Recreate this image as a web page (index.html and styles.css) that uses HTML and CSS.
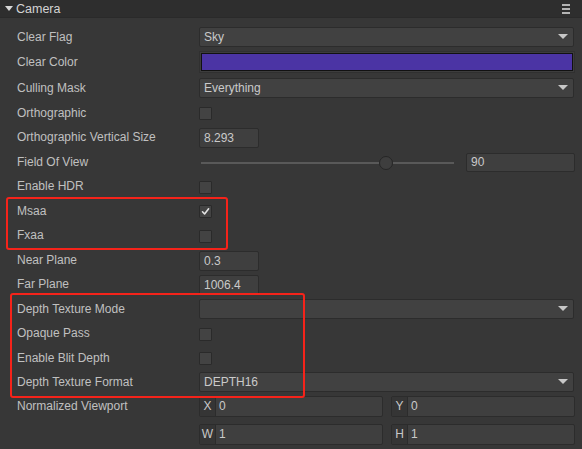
FILE: index.html
```html
<!DOCTYPE html>
<html>
<head>
<meta charset="utf-8">
<link rel="stylesheet" href="styles.css">
</head>
<body>
<div class="panel">
  <div class="header">
    <span class="caret"></span>
    <span class="title">Camera</span>
    <span class="menu"><i></i><i></i><i></i></span>
  </div>
  <div class="body">
    <div class="row"><span class="label">Clear Flag</span><div class="select">Sky<span class="arrow"></span></div></div>
    <div class="row row-tall"><span class="label">Clear Color</span><div class="color"><div class="swatch"></div></div></div>
    <div class="row"><span class="label">Culling Mask</span><div class="select">Everything<span class="arrow"></span></div></div>
    <div class="row"><span class="label">Orthographic</span><div><span class="check"></span></div></div>
    <div class="row"><span class="label">Orthographic Vertical Size</span><div><span class="num">8.293</span></div></div>
    <div class="row"><span class="label">Field Of View</span>
      <div class="slider"><div class="track"><span class="knob"></span></div><span class="num num-wide">90</span></div>
    </div>
    <div class="row"><span class="label">Enable HDR</span><div><span class="check"></span></div></div>
    <div class="row"><span class="label">Msaa</span><div><span class="check"><svg width="11" height="11" viewBox="0 0 11 11"><polyline points="2.5,5.8 4.6,8 8.6,2.8" fill="none" stroke="#e2e2e2" stroke-width="1.6" stroke-linecap="round" stroke-linejoin="round"/></svg></span></div></div>
    <div class="row"><span class="label">Fxaa</span><div><span class="check"></span></div></div>
    <div class="row"><span class="label">Near Plane</span><div><span class="num">0.3</span></div></div>
    <div class="row"><span class="label">Far Plane</span><div><span class="num">1006.4</span></div></div>
    <div class="row"><span class="label">Depth Texture Mode</span><div class="select"><span class="arrow"></span></div></div>
    <div class="row"><span class="label">Opaque Pass</span><div><span class="check"></span></div></div>
    <div class="row"><span class="label">Enable Blit Depth</span><div><span class="check"></span></div></div>
    <div class="row"><span class="label">Depth Texture Format</span><div class="select">DEPTH16<span class="arrow"></span></div></div>
    <div class="row-vp">
      <span class="label label-vp">Normalized Viewport</span>
      <div class="vp">
        <div class="field"><span class="axis">X</span><span class="fin">0</span></div>
        <div class="field"><span class="axis">Y</span><span class="fin">0</span></div>
        <div class="field"><span class="axis">W</span><span class="fin">1</span></div>
        <div class="field"><span class="axis">H</span><span class="fin">1</span></div>
      </div>
    </div>
  </div>
  <div class="mark mark-a"></div>
  <div class="mark mark-b"></div>
</div>
</body>
</html>
```
FILE: styles.css
```css
* { box-sizing: border-box; }
html, body { margin: 0; padding: 0; }
body {
  background: #373737;
  font-family: "Liberation Sans", Arial, sans-serif;
  font-size: 12px;
  color: #c2c2c2;
}
.panel {
  position: relative;
  width: 582px;
  height: 449px;
  background: #373737;
  overflow: hidden;
}
.header {
  height: 18px;
  background: #2e2e2e;
  display: flex;
  align-items: center;
  padding-left: 5px;
  padding-right: 12px;
  border-bottom: 1px solid #2a2a2a;
}
.caret {
  width: 0; height: 0;
  border-left: 4px solid transparent;
  border-right: 4px solid transparent;
  border-top: 5px solid #d8d8d8;
  margin-right: 3px;
}
.title { color: #d4d4d4; font-size: 12.5px; flex: 1; }
.menu { display: flex; flex-direction: column; gap: 2px; width: 8px; }
.menu i { display: block; height: 2px; background: #b4b4b4; }
.body { padding-top: 6.25px; }
.row {
  display: grid;
  grid-template-columns: 182px 1fr;
  align-items: center;
  height: 24.5px;
  padding: 0 7px 0 17px;
}
.row-tall { height: 27px; }
.label { color: #c0c0c0; white-space: nowrap; }
.select {
  position: relative;
  height: 20px;
  margin-right: 1px;
  background: #414141;
  border: 1px solid #2c2c2c;
  border-radius: 2px;
  padding-left: 4px;
  line-height: 18px;
  color: #cacaca;
}
.arrow {
  position: absolute;
  right: 5px;
  top: 6px;
  width: 0; height: 0;
  border-left: 5.5px solid transparent;
  border-right: 5.5px solid transparent;
  border-top: 5px solid #c8c8c8;
}
.color {
  height: 22px;
  background: #3d3d3d;
  border: 1px solid #303030;
  padding: 1px;
}
.swatch {
  height: 100%;
  background: #4b34a4;
  border: 1px solid #111;
}
.check {
  display: flex;
  align-items: center;
  justify-content: center;
  width: 13px;
  height: 13px;
  background: #434343;
  border: 1px solid #2a2a2a;
  border-radius: 1px;
  margin-top: 2px;
}
.num {
  display: block;
  width: 60px;
  height: 20px;
  background: #3f3f3f;
  border: 1px solid #2c2c2c;
  border-radius: 2px;
  padding-left: 4px;
  line-height: 18px;
  color: #cacaca;
  margin-top: 2px;
}
.slider {
  display: flex;
  align-items: center;
  gap: 12px;
  padding-left: 2px;
  margin-top: 2px;
}
.track {
  position: relative;
  flex: 1;
  height: 2px;
  background: #595959;
}
.knob {
  position: absolute;
  left: 73.1%;
  top: 50%;
  width: 14px;
  height: 14px;
  margin: -7px 0 0 -7px;
  border-radius: 50%;
  background: #3e3e3e;
  border: 1px solid #262626;
}
.num-wide { width: 109px; height: 19px; margin-top: 0; line-height: 17px; }
.row-vp {
  display: grid;
  grid-template-columns: 182px 1fr;
  padding: 1.75px 7px 0 17px;
}
.label-vp { line-height: 21px; }
.vp {
  display: grid;
  grid-template-columns: 1fr 1fr;
  column-gap: 8px;
  row-gap: 7px;
}
.field {
  display: flex;
  height: 21px;
  border: 1px solid #2c2c2c;
  border-radius: 2px;
  background: #3f3f3f;
}
.axis {
  width: 16px;
  background: #353535;
  border-right: 1px solid #2c2c2c;
  text-align: center;
  line-height: 19px;
  color: #c8c8c8;
}
.fin { padding-left: 3px; line-height: 19px; color: #cacaca; }
.mark {
  position: absolute;
  border: 2px solid #f5231a;
  border-radius: 3px;
}
.mark-a { left: 6px; top: 197px; width: 222px; height: 53px; }
.mark-b { left: 10px; top: 293px; width: 295px; height: 105px; }
```
